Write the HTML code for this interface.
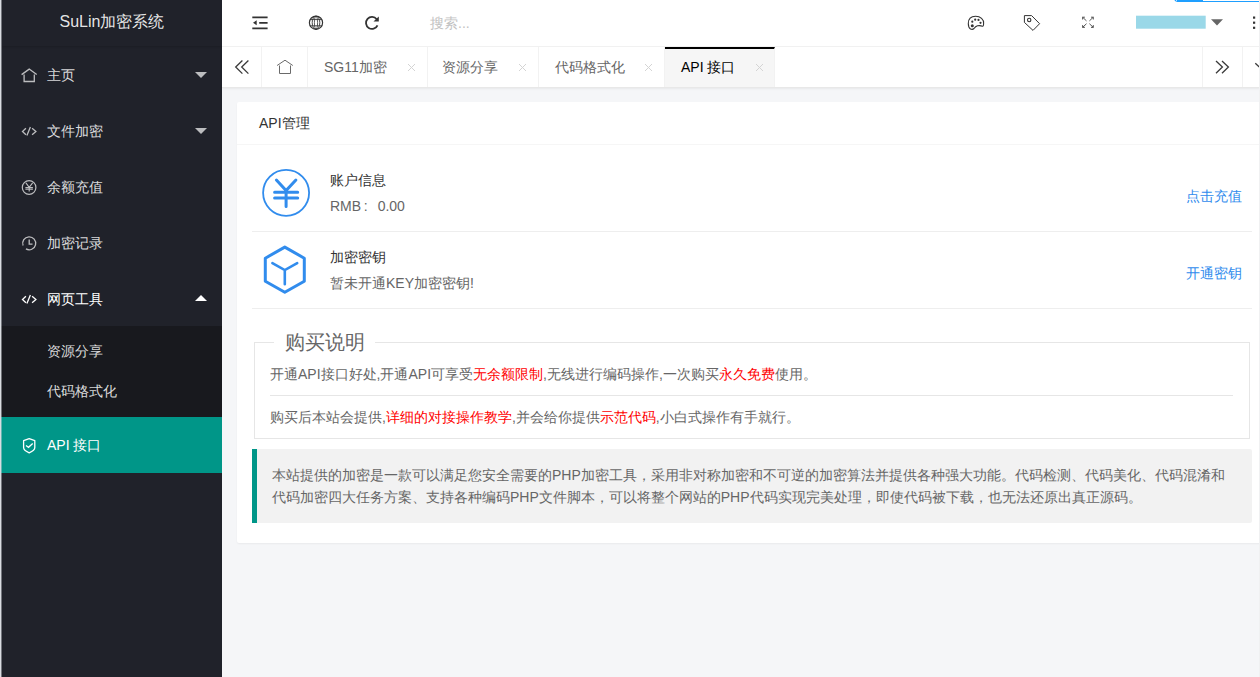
<!DOCTYPE html>
<html><head><meta charset="utf-8">
<style>
*{margin:0;padding:0;box-sizing:border-box}
html,body{width:1260px;height:677px;overflow:hidden}
body{font-family:"Liberation Sans",sans-serif;font-size:14px;color:#666;background:#f5f6f8;position:relative}
.abs{position:absolute}
svg{position:absolute;overflow:visible}
#strip{left:0;top:0;width:2px;height:677px;background:linear-gradient(to right,#d9dce1 0,#d9dce1 1px,rgba(217,220,225,.45) 1px,rgba(217,220,225,.45) 2px);z-index:6}
#rstrip{left:1259px;top:0;width:1px;height:677px;background:#f0f1f2;z-index:5}
#side{left:1px;top:0;width:221px;height:677px;background:#20222a}
#logo{left:1px;top:0;width:220px;height:46px;line-height:43px;text-align:center;color:rgba(255,255,255,.9);font-size:16px;box-shadow:0 1px 2px 0 rgba(0,0,0,.15)}
.nav{left:1px;width:220px;height:56px;color:rgba(255,255,255,.85)}
.nav .t{position:absolute;left:45px;top:1px;line-height:56px}
.tri{position:absolute;left:193px;width:0;height:0;border-left:6px solid transparent;border-right:6px solid transparent}
.tri.down{border-top:6px solid rgba(255,255,255,.7)}
.tri.up{border-bottom:6px solid #fff}
#sub{left:0;top:326px;width:221px;height:91px;background:#18191e}
.sub{left:46px;color:rgba(255,255,255,.85);line-height:40px}
#act{left:0;top:417px;width:221px;height:56px;background:#009688;color:#fff}
#head{left:222px;top:0;width:1038px;height:47px;background:#fff;border-bottom:1px solid #f2f2f2}
#tabs{left:222px;top:47px;width:1038px;height:41px;background:#fff;border-bottom:1px solid #e8e8e8;box-shadow:0 1px 2px rgba(0,0,0,.06)}
.tab{top:0;height:40px;line-height:40px;border-right:1px solid #f2f2f2;color:#666}
.x{position:absolute;top:16px;width:9px;height:9px}
#card{left:237px;top:102px;width:1030px;height:441px;background:#fff;border-radius:2px;box-shadow:0 1px 2px 0 rgba(0,0,0,.05)}
.line{position:absolute;height:1px;background:#eee}
.red{color:#f00}
</style></head><body>
<div id="strip" class="abs"></div>
<div id="side" class="abs">
  <div id="logo" class="abs">SuLin加密系统</div>
  <div class="nav abs" style="top:46px"><span class="t">主页</span><i class="tri down" style="top:26px"></i>
    <svg style="left:0;top:0" width="220" height="56"><path d="M19.6 28.6 L27.2 23.1 L34.7 28.6 M22.1 28.6 V35.5 H32.3 V28.6" fill="none" stroke="rgba(255,255,255,.7)" stroke-width="1.3"/></svg></div>
  <div class="nav abs" style="top:102px"><span class="t">文件加密</span><i class="tri down" style="top:26px"></i>
    <svg style="left:0;top:0" width="220" height="56"><path d="M23.9 26.3 L20.5 29.5 L23.9 32.7 M28.4 25.1 L24.9 33.4 M30.1 26.3 L33.9 29.5 L30.1 32.7" fill="none" stroke="rgba(255,255,255,.7)" stroke-width="1.3"/></svg></div>
  <div class="nav abs" style="top:158px"><span class="t">余额充值</span>
    <svg style="left:0;top:0" width="220" height="56"><circle cx="27.1" cy="29.5" r="6.8" fill="none" stroke="rgba(255,255,255,.7)" stroke-width="1.2"/><path d="M23.9 24.9 L27.2 29.3 L30.6 24.9 M23.4 29.6 H30.9 M23.4 31.3 H30.9 M27.2 29.3 V33.5" fill="none" stroke="rgba(255,255,255,.7)" stroke-width="1.1"/></svg></div>
  <div class="nav abs" style="top:214px"><span class="t">加密记录</span>
    <svg style="left:0;top:0" width="220" height="56"><path d="M23.95 34.93 A6.5 6.5 0 1 0 21.09 31.52" fill="none" stroke="rgba(255,255,255,.7)" stroke-width="1.3"/><path d="M27.2 25.5 V30.2 H30.5" fill="none" stroke="rgba(255,255,255,.7)" stroke-width="1.3"/></svg></div>
  <div class="nav abs" style="top:270px;color:#fff"><span class="t">网页工具</span><i class="tri up" style="top:25px"></i>
    <svg style="left:0;top:0" width="220" height="56"><path d="M23.9 26.3 L20.5 29.5 L23.9 32.7 M28.4 25.1 L24.9 33.4 M30.1 26.3 L33.9 29.5 L30.1 32.7" fill="none" stroke="#fff" stroke-width="1.3"/></svg></div>
  <div id="sub" class="abs">
    <div class="sub abs" style="top:5px">资源分享</div>
    <div class="sub abs" style="top:45px">代码格式化</div>
  </div>
  <div id="act" class="abs"><span class="abs" style="left:46px;line-height:56px">API 接口</span>
    <svg style="left:1px;top:0" width="220" height="56"><path d="M27.2 21.7 L32.8 23.6 V30.5 Q32.8 33.5 27.2 35.8 Q21.6 33.5 21.6 30.5 V23.6 Z" fill="none" stroke="#fff" stroke-width="1.3" stroke-linejoin="round"/><path d="M24 28.5 L26.5 30.3 L30.7 26.5" fill="none" stroke="#fff" stroke-width="1.3"/></svg></div>
</div>
<div id="head" class="abs">
  <svg style="left:0;top:0" width="1038" height="46">
    <g fill="none" stroke="#333" stroke-width="1.8">
      <path d="M30.3 17.3 H45.6 M37.2 22.8 H45.6 M30.3 28.4 H45.6"/>
    </g>
    <path d="M31 22.8 L34.7 20.3 V25.3 Z" fill="#333"/>
    <g fill="none" stroke="#333" stroke-width="1.2">
      <circle cx="94" cy="22.7" r="6.6" stroke-width="1.2"/>
      <ellipse cx="94" cy="22.7" rx="3.8" ry="6.6" stroke-width="0.9"/>
      <ellipse cx="94" cy="22.7" rx="1.6" ry="6.6" stroke-width="0.8"/>
      <path d="M88.4 19.6 H99.6 M88.4 25.8 H99.6" stroke-width="0.9"/>
    </g>
    <g fill="none" stroke="#333" stroke-width="1.8">
      <path d="M155.5 25.3 A6.0 6.0 0 1 1 154.7 19.2"/>
    </g>
    <path d="M156.8 16.5 V21.6 H151.5 Z" fill="#333"/>
    <!-- palette -->
    <g transform="translate(0,0)">
      <path d="M753.6 16.2 C758.5 16.2 762 19.5 761.6 23.5 Q761.6 26.4 760.5 26.2 Q758 25.2 755.5 25.8 Q753.5 26.5 752 28.5 Q750.5 30 748.5 29 Q746.3 27.5 746.3 23.5 Q746.3 16.2 753.6 16.2 Z" fill="none" stroke="#333" stroke-width="1.1"/>
      <circle cx="750.3" cy="21.7" r="1.1" fill="#333"/>
      <circle cx="753.2" cy="19.7" r="1.1" fill="#333"/>
      <circle cx="756.5" cy="19.9" r="1.1" fill="#333"/>
      <circle cx="758.5" cy="22.8" r="1.1" fill="#333"/>
      <circle cx="750.3" cy="25.7" r="1.5" fill="#333"/>
    </g>
    <!-- tag -->
    <path d="M802.4 15.6 H809.6 L817.6 23.7 L811 30.4 L802.4 22.4 Z" fill="none" stroke="#333" stroke-width="1" stroke-linejoin="round"/>
    <circle cx="807.2" cy="20" r="1.7" fill="none" stroke="#333" stroke-width="1.1"/>
    <!-- fullscreen -->
    <g fill="none" stroke="#444" stroke-width="0.9">
      <path d="M860.6 17.2 L864.5 20.9 M860.6 17.2 V19.5 M860.6 17.2 H862.9"/>
      <path d="M871.3 17.2 L867.4 20.9 M871.3 17.2 V19.5 M871.3 17.2 H869"/>
      <path d="M860.6 27.4 L864.5 23.7 M860.6 27.4 V25.1 M860.6 27.4 H862.9"/>
      <path d="M871.3 27.4 L867.4 23.7 M871.3 27.4 V25.1 M871.3 27.4 H869"/>
    </g>
    <rect x="914" y="15.7" width="69.7" height="13" fill="#9ad8e8"/>
    <path d="M989 19.2 H1001 L995 25.4 Z" fill="#666"/>
    <rect x="1031" y="16.5" width="2.2" height="2.2" fill="#333"/>
    <rect x="1031" y="21.6" width="2.2" height="2.2" fill="#333"/>
    <rect x="1031" y="26.7" width="2.2" height="2.2" fill="#333"/>
  </svg>
  <span class="abs" style="left:208px;top:0;line-height:46px;color:#c2c2c2">搜索...</span>
</div>
<div id="tabs" class="abs">
  <div class="tab abs" style="left:0;width:40px"></div>
  <div class="tab abs" style="left:40px;width:46px"></div>
  <div class="tab abs" style="left:86px;width:120px"><span class="abs" style="left:16px">SG11加密</span><svg class="x" style="left:99px" width="9" height="9"><path d="M1 1L8 8M8 1L1 8" stroke="#d4d4d4" stroke-width="1"/></svg></div>
  <div class="tab abs" style="left:206px;width:111px"><span class="abs" style="left:14px">资源分享</span><svg class="x" style="left:90px" width="9" height="9"><path d="M1 1L8 8M8 1L1 8" stroke="#d4d4d4" stroke-width="1"/></svg></div>
  <div class="tab abs" style="left:317px;width:126px"><span class="abs" style="left:16px">代码格式化</span><svg class="x" style="left:105px" width="9" height="9"><path d="M1 1L8 8M8 1L1 8" stroke="#d4d4d4" stroke-width="1"/></svg></div>
  <div class="tab abs" style="left:443px;width:110px;background:#f6f6f6;color:#000;border-top:2px solid #000;top:0;height:40px"><span class="abs" style="left:16px;top:-2px">API 接口</span><svg class="x" style="left:90px;top:14px" width="9" height="9"><path d="M1 1L8 8M8 1L1 8" stroke="#d4d4d4" stroke-width="1"/></svg></div>
  <div class="tab abs" style="left:980px;width:41px;border-left:1px solid #f2f2f2"></div>
  <svg style="left:0;top:0" width="1038" height="41">
    <path d="M20.4 13.5 L13.7 20 L20.4 26.6 M26.4 13.5 L19.7 20 L26.4 26.6" fill="none" stroke="#3a3a3a" stroke-width="1.3"/>
    <path d="M55.1 18.5 L63 13.2 L70.8 18.5 M57.5 18.5 V26.5 H68.5 V18.5" fill="none" stroke="#6a6a6a" stroke-width="1"/>
    <path d="M994 14 L1000.4 20 L994 26.3 M1000 14 L1006.4 20 L1000 26.3" fill="none" stroke="#3a3a3a" stroke-width="1.3"/>
    <path d="M1033.3 16.2 L1037.3 19.9" fill="none" stroke="#3a3a3a" stroke-width="1.3"/>
  </svg>
</div>
<div id="card" class="abs">
  <div class="abs" style="left:0;top:0;width:1022px;height:43px;border-bottom:1px solid #f6f6f6;line-height:42px;padding-left:22px;color:#333">API管理</div>
  <svg style="left:0;top:-1px" width="1022" height="443">
    <circle cx="49.1" cy="91.8" r="23" fill="none" stroke="#318ced" stroke-width="1.8"/>
    <path d="M39.4 79 L49.1 89.6 L58.9 79 M37.6 91.2 H60.7 M37.6 97.1 H60.7 M49.1 89.6 V105.6" fill="none" stroke="#318ced" stroke-width="3" stroke-linecap="round"/>
    <path d="M47.8 146.1 L67.3 157.2 V180.2 L47.8 191.3 L28.3 180.2 V157.2 Z" fill="none" stroke="#318ced" stroke-width="3" stroke-linejoin="round"/>
    <path d="M35.4 162.2 L47.8 169.1 L60.2 162.2 M47.8 169.1 V183.3" fill="none" stroke="#318ced" stroke-width="2.6" stroke-linecap="round"/>
  </svg>
  <div class="abs" style="left:93px;top:68px;color:#333;line-height:20px">账户信息</div>
  <div class="abs" style="left:93px;top:94px;color:#666;line-height:20px">RMB<span style="display:inline-block;width:16.5px;padding-left:2.5px">:</span>0.00</div>
  <div class="abs" style="left:949px;top:84px;color:#318ced;line-height:20px">点击充值</div>
  <div class="line" style="left:15px;top:129px;width:1000px"></div>
  <div class="abs" style="left:93px;top:145px;color:#333;line-height:20px">加密密钥</div>
  <div class="abs" style="left:93px;top:171px;color:#666;line-height:20px">暂未开通KEY加密密钥!</div>
  <div class="abs" style="left:949px;top:161px;color:#318ced;line-height:20px">开通密钥</div>
  <div class="line" style="left:15px;top:206px;width:1000px"></div>
  <!-- fieldset -->
  <div class="abs" style="left:17px;top:240px;width:996px;height:97px;border:1px solid #e6e6e6"></div>
  <div class="abs" style="left:37px;top:225px;width:101px;height:30px;background:#fff"></div>
  <div class="abs" style="left:48px;top:225px;line-height:30px;font-size:20px;font-weight:300;color:#666">购买说明</div>
  <div class="abs" style="left:33px;top:261px;line-height:22px;color:#666">开通API接口好处,开通API可享受<span class="red">无余额限制</span>,无线进行编码操作,一次购买<span class="red">永久免费</span>使用。</div>
  <div class="line" style="left:33px;top:293px;width:963px;background:#e6e6e6"></div>
  <div class="abs" style="left:33px;top:304px;line-height:22px;color:#666">购买后本站会提供,<span class="red">详细的对接操作教学</span>,并会给你提供<span class="red">示范代码</span>,小白式操作有手就行。</div>
  <!-- alert -->
  <div class="abs" style="left:15px;top:347px;width:1000px;height:74px;background:#f2f2f2;border-left:5px solid #009688;border-radius:0 2px 2px 0"></div>
  <div class="abs" style="left:35px;top:362px;line-height:22px;color:#666;white-space:nowrap">本站提供的加密是一款可以满足您安全需要的PHP加密工具，采用非对称加密和不可逆的加密算法并提供各种强大功能。代码检测、代码美化、代码混淆和<br>代码加密四大任务方案、支持各种编码PHP文件脚本，可以将整个网站的PHP代码实现完美处理，即使代码被下载，也无法还原出真正源码。</div>
</div>
<div class="abs" style="left:1174px;top:-4px;width:100px;height:5.8px;border-left:1.6px solid #1e9fff;border-bottom:1.4px solid #1e9fff;border-radius:0 0 0 4px"></div>
<div class="abs" style="left:1177px;top:0;width:26px;height:1.8px;background:#1e9fff"></div>
<div id="rstrip" class="abs"></div>
</body></html>
